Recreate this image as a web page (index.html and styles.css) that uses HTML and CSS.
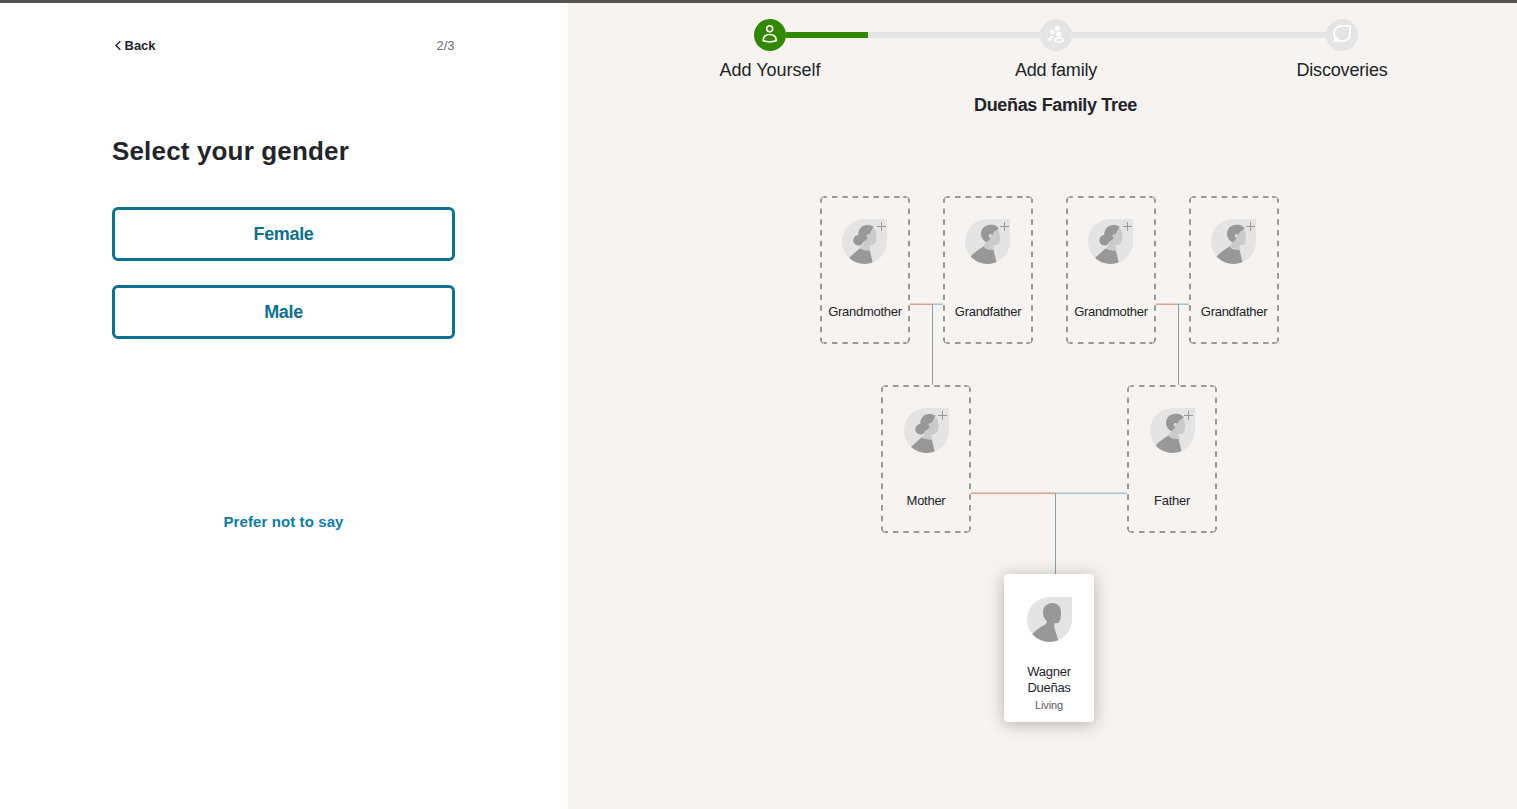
FILE: index.html
```
<!DOCTYPE html>
<html lang="en">
<head>
<meta charset="utf-8">
<title>Dueñas Family Tree</title>
<link rel="stylesheet" href="styles.css">
</head>
<body>
<svg class="defs" width="0" height="0" aria-hidden="true">
  <defs>
    <clipPath id="drop"><path d="M22.500 0H45V22.500A22.500 22.500 0 0 1 0 22.500A22.500 22.500 0 0 1 22.500 0Z"/></clipPath>
    <symbol id="woman" viewBox="0 0 45 45">
      <g clip-path="url(#drop)">
        <path fill="#e4e4e4" d="M0 0H45V45H0Z"/>
        <path fill="#cbcbcb" d="M30 7C33.500 10 35 14 34.500 19C34 23 33 26 29.500 26L27.500 26.500L28 33L17 31L22 24L25 14Z"/>
        <path fill="#989898" d="M16.300 16C16 10 20 6 25.500 6C28 6 30 6.700 31.500 7.500C30 10 29 13 27.300 15.200C25.500 14.300 24.300 15.500 24.400 17.300L25.800 19.300L21 23.500C20 26 18.200 26.500 16.500 26.500C13.400 26.500 11.300 24.200 11.300 21.300C11.300 18.600 13.300 16.400 16.300 16Z"/>
        <path fill="#989898" d="M17.500 29.500C21 31.500 24 31.700 28 31.700L31 45H15L4 41.500Z"/>
      </g>
    </symbol>
    <symbol id="man" viewBox="0 0 45 45">
      <g clip-path="url(#drop)">
        <path fill="#e4e4e4" d="M0 0H45V45H0Z"/>
        <path fill="#cbcbcb" d="M30 9C34 10 35.500 14 35 20C34.500 24.500 33 27 28.500 26L29.300 32L18 28L22 22Z"/>
        <path fill="#989898" d="M33.800 9.200C31 5.900 27.800 5.700 25 5.800C19.500 6.200 16 10 16 14.800C16 18.800 18.500 22 21.700 23.300L25.500 19.500C23.300 18.400 23.300 15.500 25.300 15C26.300 14.800 27 15.400 27.300 16.200L29 12.500C30.500 12.200 32.800 10.700 33.800 9.200Z"/>
        <path fill="#989898" d="M18.500 27.500C21 30.500 24.500 31.300 28.500 31L32 45H15L2 42C7 35 11.500 31.800 18.500 27.500Z"/>
      </g>
    </symbol>
    <symbol id="self" viewBox="0 0 45 45">
      <g clip-path="url(#drop)">
        <path fill="#e4e4e4" d="M0 0H45V45H0Z"/>
        <path fill="#989898" d="M25.200 6C31 6 34 10 34 15.500C34 20 33.500 24 31.500 25.800C30.200 26.500 28.500 26 27.300 26.200L27.500 31L31.700 45H15L1 42C7 35 11 31 18.500 27.500L20 24.500C17.500 22 16 19 16 15.200C16 10 20 6 25.200 6Z"/>
      </g>
    </symbol>
    <symbol id="frame" viewBox="0 0 90 148">
      <g fill="none" stroke="#999" stroke-width="2">
        <path stroke-dasharray="5.500 4.850" d="M12 1H80M12 147H80"/>
        <path stroke-dasharray="5.400 5.350" d="M1 12.500V137M89 12.500V137"/>
        <path d="M3.500 1H6.800M83.200 1H86.500M3.500 147H6.800M83.200 147H86.500M1 3V6.800M89 3V6.800M1 141.500V145M89 141.500V145" />
        <path stroke-width="1.200" d="M1 3.500Q1.300 1.300 3.500 1M89 3.500Q88.700 1.300 86.500 1M1 144.500Q1.300 146.700 3.500 147M89 144.500Q88.700 146.700 86.500 147"/>
      </g>
    </symbol>
  </defs>
</svg>
<div class="page">
  <main class="panel">
    <header class="panel-top">
      <a class="back"><svg width="8" height="11" viewBox="0 0 8 11"><path d="M6.300 1.200L2 5.500L6.300 9.800" fill="none" stroke="#222529" stroke-width="1.400"/></svg><span>Back</span></a>
      <span class="count">2/3</span>
    </header>
    <h1 class="question">Select your gender</h1>
    <div class="choices">
      <button class="choice">Female</button>
      <button class="choice">Male</button>
    </div>
    <a class="skip">Prefer not to say</a>
  </main>
  <section class="preview">
    <div class="steps">
      <div class="step">
        <span class="dot active"><svg width="32" height="32" viewBox="0 0 32 32" fill="none" stroke="#fff" stroke-width="1.600"><circle cx="15.700" cy="9.800" r="3"/><path d="M9.200 21.800C9.200 17.500 12 15.500 15.700 15.500S22.200 17.500 22.200 21.800C18.500 23 12.900 23 9.200 21.800Z" stroke-linejoin="round"/></svg></span>
        <span class="label first">Add Yourself</span>
      </div>
      <div class="bar"><div class="fill"></div></div>
      <div class="step">
        <span class="dot"><svg width="32" height="32" viewBox="0 0 32 32" fill="#fff"><circle cx="17.300" cy="9.600" r="2.500"/><circle cx="12.400" cy="13.200" r="2.500"/><circle cx="18.800" cy="15" r="2.600"/><path d="M13.800 17C10.500 16.400 8.300 18.200 7.500 21.600H12.500V20H10.300C11 18.500 11.800 18.200 13.300 18.500Z"/><path d="M14.700 22.200C14.700 19.800 16.400 18.800 19 18.800S23.300 19.800 23.300 22.200C20.500 22.900 17.500 22.900 14.700 22.200Z" fill="none" stroke="#fff" stroke-width="1.500"/></svg></span>
        <span class="label">Add family</span>
      </div>
      <div class="bar"></div>
      <div class="step">
        <span class="dot"><svg width="32" height="32" viewBox="0 0 32 32" fill="none" stroke="#fff" stroke-width="1.900"><path d="M24 6.900V14.500C24 19.300 20.600 22.300 16.300 22.300C11.600 22.300 8 19.100 8 14.700C8 9.900 11.800 6.900 16.300 6.900ZM7.500 22.800L12.300 18.500M8.600 19.800L11.700 22.800"/></svg></span>
        <span class="label">Discoveries</span>
      </div>
    </div>
    <h2 class="tree-title">Dueñas Family Tree</h2>
    <div class="tree">
      <svg class="links" width="949" height="620" viewBox="568 180 949 620" shape-rendering="crispEdges">
        <path fill="#ecc8bb" d="M910 303H932V304H910ZM1156 303H1178V304H1156ZM971 492H1055V493H971Z"/>
        <path fill="#e29f8a" d="M910 304H932V305H910ZM1156 304H1178V305H1156ZM971 493H1055V494H971Z"/>
        <path fill="#c8dce4" d="M932 303H943V304H932ZM1178 303H1189V304H1178ZM1055 492H1127V493H1055Z"/>
        <path fill="#a6c5d2" d="M933 304H943V305H933ZM1179 304H1189V305H1179ZM1056 493H1127V494H1056Z"/>
        <path fill="#869fae" d="M932 304H933V385H932ZM1178 304H1179V385H1178ZM1055 493H1056V574H1055Z"/>
      </svg>
      <div class="card gm1"><svg class="frame"><use href="#frame"/></svg><svg class="avatar"><use href="#woman"/></svg><i class="plus"></i><span>Grandmother</span></div>
      <div class="card gf1"><svg class="frame"><use href="#frame"/></svg><svg class="avatar"><use href="#man"/></svg><i class="plus"></i><span>Grandfather</span></div>
      <div class="card gm2"><svg class="frame"><use href="#frame"/></svg><svg class="avatar"><use href="#woman"/></svg><i class="plus"></i><span>Grandmother</span></div>
      <div class="card gf2"><svg class="frame"><use href="#frame"/></svg><svg class="avatar"><use href="#man"/></svg><i class="plus"></i><span>Grandfather</span></div>
      <div class="card parent mother"><svg class="frame"><use href="#frame"/></svg><svg class="avatar"><use href="#woman"/></svg><i class="plus"></i><span>Mother</span></div>
      <div class="card parent father"><svg class="frame"><use href="#frame"/></svg><svg class="avatar"><use href="#man"/></svg><i class="plus"></i><span>Father</span></div>
      <div class="card me"><svg class="avatar"><use href="#self"/></svg><span>Wagner<br>Dueñas</span><small>Living</small></div>
    </div>
  </section>
</div>
</body>
</html>
```
FILE: styles.css
```
* { box-sizing: border-box; }
body { margin: 0; font-family: "Liberation Sans", Arial, sans-serif; color: #222529; background: #fff; }
.defs { position: absolute; }
.page { display: flex; height: 809px; border-top: 3px solid #555351; overflow: hidden; }
.panel { width: 568px; padding: 32px 113px 0 112px; display: flex; flex-direction: column; }
.panel-top { display: flex; justify-content: space-between; align-items: center; height: 20px; font-size: 13px; }
.back { display: flex; align-items: center; gap: 3px; padding-left: 1.5px; font-weight: bold; }
.count { color: #6c6c6e; padding-right: 0.5px; }
.question { margin: 78px 0 0; font-size: 26px; line-height: 36px; letter-spacing: 0.16px; white-space: nowrap; }
.choices { display: grid; gap: 24px; margin-top: 38px; }
.choice { height: 54px; padding: 0; border: 3px solid #0d7194; border-radius: 6px; background: #fff; color: #0d7194; font: bold 18px "Liberation Sans", Arial, sans-serif; letter-spacing: -0.35px; }
.skip { margin-top: 173px; text-align: center; font-size: 15px; line-height: 20px; font-weight: bold; letter-spacing: 0.1px; color: #0d7ea8; }
.preview { flex: 1; background: #f6f3f0; display: flex; flex-direction: column; }
.steps { display: flex; height: 66px; padding: 16px 159px 0 186px; }
.step { width: 32px; display: flex; flex-direction: column; align-items: center; gap: 8px; }
.dot { width: 32px; height: 32px; border-radius: 50%; background: #e4e4e4; flex: none; }
.dot.active { background: #318801; }
.dot svg { display: block; }
.label { font-size: 18px; line-height: 22px; letter-spacing: -0.18px; white-space: nowrap; }
.label.first { letter-spacing: 0; }
.bar { flex: 1; height: 6px; margin-top: 13px; background: #e4e4e4; }
.fill { width: 82px; height: 6px; background: #318801; }
.tree-title { margin: 25px 0 0; padding-left: 26px; font-size: 18px; line-height: 22px; letter-spacing: -0.34px; text-align: center; }
.tree { position: relative; height: 620px; margin-top: 64px; }
.links { display: block; }
.card { position: absolute; width: 90px; height: 148px; padding-top: 23px; border-radius: 4px; display: flex; flex-direction: column; align-items: center; font-size: 13px; line-height: 16px; letter-spacing: -0.27px; text-align: center; white-space: nowrap; }
.frame { position: absolute; left: 0; top: 0; width: 90px; height: 148px; }
.avatar { width: 45px; height: 45px; margin-bottom: 40px; margin-right: 1px; flex: none; }
.parent .avatar { margin-right: -1px; }
.plus { position: absolute; left: 57px; top: 26px; width: 9px; height: 9px; background: linear-gradient(#999, #999) 50% 50% / 1px 9px no-repeat, linear-gradient(#999, #999) 50% 50% / 9px 1px no-repeat; }
.gm1 { left: 252px; top: 16px; }
.gf1 { left: 375px; top: 16px; }
.gm2 { left: 498px; top: 16px; }
.gf2 { left: 621px; top: 16px; }
.mother { left: 313px; top: 205px; }
.father { left: 559px; top: 205px; }
.me { left: 436px; top: 394px; background: #fff; box-shadow: 0 2px 16px rgba(60, 50, 40, 0.35); }
.me .avatar { margin-bottom: 22px; margin-right: 0; }
.me small { margin-top: 2px; font-size: 11px; line-height: 14px; letter-spacing: -0.1px; color: #58595b; }
```
